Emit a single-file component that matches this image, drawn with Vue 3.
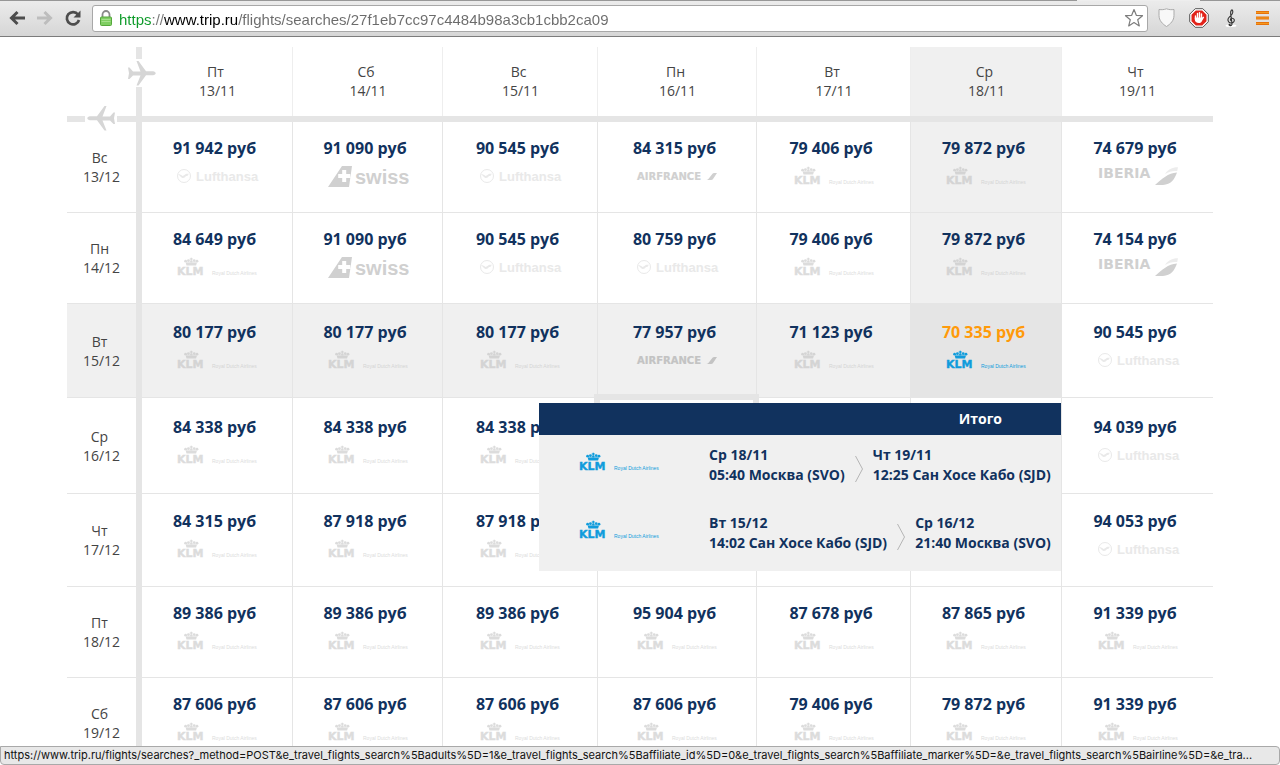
<script setup>
import { h } from 'vue'

const url = 'https://www.trip.ru/flights/searches/27f1eb7cc97c4484b98a3cb1cbb2ca09'
const statusText =
  'https://www.trip.ru/flights/searches?_method=POST&e_travel_flights_search%5Badults%5D=1&e_travel_flights_search%5Baffiliate_id%5D=0&e_travel_flights_search%5Baffiliate_marker%5D=&e_travel_flights_search%5Bairline%5D=&e_tra...'

const columns = [
  { day: 'Пт', date: '13/11', width: 151 },
  { day: 'Сб', date: '14/11', width: 150 },
  { day: 'Вс', date: '15/11', width: 155 },
  { day: 'Пн', date: '16/11', width: 159 },
  { day: 'Вт', date: '17/11', width: 154 },
  { day: 'Ср', date: '18/11', width: 151 },
  { day: 'Чт', date: '19/11', width: 151 }
]

const K = 'klm'
const L = 'lufthansa'
const S = 'swiss'
const A = 'airfrance'
const I = 'iberia'

const rows = [
  { day: 'Вс', date: '13/12', height: 91, cells: [['91 942', L], ['91 090', S], ['90 545', L], ['84 315', A], ['79 406', K], ['79 872', K], ['74 679', I]] },
  { day: 'Пн', date: '14/12', height: 91, cells: [['84 649', K], ['91 090', S], ['90 545', L], ['80 759', L], ['79 406', K], ['79 872', K], ['74 154', I]] },
  { day: 'Вт', date: '15/12', height: 94, cells: [['80 177', K], ['80 177', K], ['80 177', K], ['77 957', A], ['71 123', K], ['70 335', K], ['90 545', L]] },
  { day: 'Ср', date: '16/12', height: 96, cells: [['84 338', K], ['84 338', K], ['84 338', K], null, null, null, ['94 039', L]] },
  { day: 'Чт', date: '17/12', height: 93, cells: [['84 315', K], ['87 918', K], ['87 918', K], null, null, null, ['94 053', L]] },
  { day: 'Пт', date: '18/12', height: 91, cells: [['89 386', K], ['89 386', K], ['89 386', K], ['95 904', K], ['87 678', K], ['87 865', K], ['91 339', K]] },
  { day: 'Сб', date: '19/12', height: 91, cells: [['87 606', K], ['87 606', K], ['87 606', K], ['87 606', K], ['79 406', K], ['79 872', K], ['91 339', K]] }
]

const active = { row: 2, col: 5 }
const selected = { row: 3, col: 3 }

const legs = [
  { from: ['Ср 18/11', '05:40 Москва (SVO)'], to: ['Чт 19/11', '12:25 Сан Хосе Кабо (SJD)'] },
  { from: ['Вт 15/12', '14:02 Сан Хосе Кабо (SJD)'], to: ['Ср 16/12', '21:40 Москва (SVO)'] }
]

const planePath =
  'M3 8.500h1.500l3.500 4h7.500L11.500 2h2L21 12.300h7c1.500.2 2.700 1 2.700 2s-1.200 1.800-2.700 2h-7L13.500 26.500h-2l4-10H8l-3.500 3.600H3l1-5.800z'

function cellClass(r, c) {
  return {
    lit: (r === active.row && c < active.col) || (c === active.col && r < active.row),
    active: r === active.row && c === active.col
  }
}

const wide = '"DejaVu Sans", sans-serif'
const sans = '"Liberation Sans", Arial, sans-serif'
const word = (x, y, size, family, weight, value) =>
  h('text', { x, y, 'font-size': size, 'font-family': family, 'font-weight': weight }, value)

const art = {
  klm: () => [
    h('path', { d: 'M13.600 1.800h1.400v.8h.9v1h-.9v1h-1.400v-1h-.9v-1h.9zM8.800 7h11l-.7 2.400H9.500z' }),
    h('circle', { cx: 8.6, cy: 5.2, r: 1.4 }),
    h('circle', { cx: 11.4, cy: 4.6, r: 1.4 }),
    h('circle', { cx: 14.3, cy: 5.4, r: 1.2 }),
    h('circle', { cx: 17.2, cy: 4.6, r: 1.4 }),
    h('circle', { cx: 20, cy: 5.2, r: 1.4 }),
    h('path', { opacity: 0.6, d: 'M9 5.500h10.600v1.600H9z' }),
    h('g', { stroke: 'currentColor', 'stroke-width': 0.4 }, [word(0, 19, 11, wide, 700, 'KLM')]),
    word(35, 19, 5, sans, 400, 'Royal Dutch Airlines')
  ],
  lufthansa: () => [
    h('circle', { cx: 7, cy: 11, r: 6.5, fill: 'none', stroke: 'currentColor', 'stroke-width': 1 }),
    h('path', { d: 'M1 9c2 .2 3.300 1 4.600 2 1.600-.2 2.200-1.900 4-2.200h2.400l-.8 1h-1l1 .3-1 .9H9c-.8 1.300-2 2.100-3.400 1.900C4.300 12.700 2.800 10.600 1 9z' }),
    word(19, 16, 13, sans, 700, 'Lufthansa')
  ],
  swiss: () => [
    h('path', { 'fill-rule': 'evenodd', d: 'M14 1h10l-3 21H0zM14.200 5v4h-4v4h4v4h4v-4h4V9h-4V5z' }),
    word(27, 19, 20, sans, 700, 'swiss')
  ],
  airfrance: () => [
    h('g', { stroke: 'currentColor', 'stroke-width': 0.2 }, [word(0, 15, 10, wide, 700, 'AIRFRANCE')]),
    h('path', { d: 'M75.500 8.800Q76 8 77.200 8H80l-3.800 5.800Q75.500 15 74 15h-4.500q1.500-.4 2.300-1.500z' })
  ],
  iberia: () => [
    word(0, 13, 14, wide, 700, 'IBERIA'),
    h('path', { d: 'M79 7.500c-2.500 7-6 12-14 12.500h-8C64 14 70 8 79 7.500z' }),
    h('path', { opacity: 0.4, d: 'M80 2.200C75 2 69.500 4.500 67 9c4-2.500 8-3.500 12.200-3z' })
  ]
}

const names = { klm: 'KLM', lufthansa: 'Lufthansa', swiss: 'Swiss', airfrance: 'Air France', iberia: 'Iberia' }

const AirlineLogo = (props) =>
  h(
    'svg',
    { viewBox: '0 0 80 24', width: 80, height: 24, fill: 'currentColor', role: 'img', 'aria-label': names[props.name] },
    art[props.name]()
  )
AirlineLogo.props = ['name']
</script>

<template>
  <div class="window">
    <header class="toolbar">
      <button class="tool" type="button" aria-label="Назад">
        <svg viewBox="0 0 18 18" width="18" height="18" fill="none" stroke="#4d4d4d" stroke-width="3"><path d="M17 9H4M9.500 3L3.500 9l6 6" /></svg>
      </button>
      <button class="tool" type="button" aria-label="Вперёд" disabled>
        <svg viewBox="0 0 18 18" width="18" height="18" fill="none" stroke="#bdbdbd" stroke-width="3"><path d="M1 9h13M8.500 3l6 6-6 6" /></svg>
      </button>
      <button class="tool" type="button" aria-label="Обновить">
        <svg viewBox="0 0 18 18" width="18" height="18"><path d="M14 5.500A6.200 6.200 0 1 0 15 11" fill="none" stroke="#4d4d4d" stroke-width="2.700" /><path d="M16.500 1.500v7h-7z" fill="#4d4d4d" /></svg>
      </button>
      <div class="address">
        <svg class="lock" viewBox="0 0 12 16" width="12" height="16">
          <path d="M2.500 8V4.500a3.500 3.500 0 0 1 7 0V8" fill="none" stroke="#8a8a8a" stroke-width="1.800" />
          <rect x=".5" y="7" width="11" height="8.500" rx="1" fill="#7fce62" stroke="#56a83c" />
          <path d="M1.500 9.500h9M1.500 11.500h9" stroke="#a5e08c" />
        </svg>
        <input class="url" type="text" aria-label="Адрес страницы" :value="url" />
        <button class="star" type="button" aria-label="Добавить в закладки">
          <svg viewBox="0 0 20 20" width="20" height="20" fill="#fff" stroke="#7d7d7d" stroke-width="1.200" stroke-linejoin="round"><path d="M10 1.500l2.300 5.800 6.200.4-4.800 4 1.600 6.200L10 14.500l-5.300 3.400 1.600-6.200-4.800-4 6.200-.4z" /></svg>
        </button>
      </div>
      <button class="ext" type="button" aria-label="Щит">
        <svg viewBox="0 0 20 20" width="20" height="20"><path d="M9.500.8c2.500 1 5 1 7.500.7v6c0 5-3.500 8.500-7.500 11C5.500 16 2 12.500 2 7.500v-6C4.500 1.800 7 1.800 9.500.8z" fill="#f8f8f8" stroke="#ababab" /></svg>
      </button>
      <button class="ext" type="button" aria-label="Блокировщик">
        <svg viewBox="0 0 20 20" width="20" height="20">
          <path d="M6.200.7h7.600l5.500 5.500v7.600l-5.500 5.500H6.200L.7 13.800V6.200z" fill="#fff" stroke="#555" />
          <path d="M6.800 2.500h6.400l4.300 4.300v6.400l-4.300 4.300H6.800l-4.300-4.300V6.800z" fill="#e2231a" />
          <path d="M6.500 8v3M8.500 5.500v5M10.500 4.800v5M12.500 6v5" stroke="#fff" stroke-width="1.400" stroke-linecap="round" />
          <path d="M5.800 9.500h7.400l1.300-1 .7.700-2.200 3.800c-.7 1.500-1.500 2-3 2-2.500 0-4.200-1.500-4.200-3.500z" fill="#fff" />
        </svg>
      </button>
      <button class="ext" type="button" aria-label="Музыка">
        <svg viewBox="0 0 20 20" width="20" height="20" fill="none" stroke="#333" stroke-width="1.100">
          <ellipse cx="10" cy="17.800" rx="5.500" ry="1.200" fill="#fff" stroke="none" />
          <path d="M10.200 12.800c-1.400-.8-.8-2.700.9-2.600 1.900.1 2.700 1.900 1.900 3.300-1 1.800-4 1.900-5.300.3-1.300-1.700-.7-3.500.8-4.900 1.800-1.600 3.500-3.100 3.300-5.300-.1-1.600-.9-2.300-1.600-1.200-.7 1-.7 2.400-.5 3.900l1.300 9.200c.2 1.700-1 2.500-2.200 2" />
          <circle cx="8.600" cy="16.800" r="1.100" fill="#333" stroke="none" />
        </svg>
      </button>
      <button class="ext" type="button" aria-label="Меню">
        <svg viewBox="0 0 20 20" width="20" height="20"><path d="M3 4.500h13M3 10h13M3 15.500h13" stroke="#e8720c" stroke-width="3" /><path d="M3 4.500h13M3 10h13M3 15.500h13" stroke="#f39a1e" /></svg>
      </button>
    </header>

    <main class="page">
      <table class="matrix">
        <colgroup>
          <col class="head-col" />
          <col v-for="c in columns" :key="c.date" :style="{ width: c.width + 'px' }" />
        </colgroup>
        <thead>
          <tr>
            <td class="corner">
              <svg class="plane out" viewBox="0 0 32 28" width="32" height="28"><path :d="planePath" /></svg>
              <svg class="plane back" viewBox="0 0 32 28" width="32" height="28"><path transform="translate(33 0) scale(-1 1)" :d="planePath" /></svg>
            </td>
            <th v-for="(c, i) in columns" :key="c.date" scope="col" :class="{ lit: i === active.col }">
              <span class="day">{{ c.day }}</span>
              <span class="date">{{ c.date }}</span>
            </th>
          </tr>
        </thead>
        <tbody>
          <tr v-for="(row, r) in rows" :key="row.date" :style="{ height: row.height + 'px' }">
            <th scope="row" :class="{ lit: r === active.row }">
              <span class="day">{{ row.day }}</span>
              <span class="date">{{ row.date }}</span>
            </th>
            <td v-for="(cell, c) in row.cells" :key="c" :class="cellClass(r, c)">
              <span v-if="r === selected.row && c === selected.col" class="frame"></span>
              <a v-if="cell" class="offer" :class="cell[1]" href="#">
                <span class="price">{{ cell[0] }} руб</span>
                <AirlineLogo :name="cell[1]" />
              </a>
              <section v-if="r === active.row && c === active.col" class="summary">
                <h2>Итого</h2>
                <div v-for="leg in legs" :key="leg.from[0]" class="leg">
                  <AirlineLogo name="klm" />
                  <p>{{ leg.from[0] }}<br />{{ leg.from[1] }}</p>
                  <svg class="chevron" viewBox="0 0 8 28" width="8" height="28"><path d="M.5 1l7 13-7 13" fill="none" stroke="#b4b4b4" /></svg>
                  <p>{{ leg.to[0] }}<br />{{ leg.to[1] }}</p>
                </div>
              </section>
            </td>
          </tr>
        </tbody>
      </table>
    </main>

    <footer class="status">{{ statusText }}</footer>
  </div>
</template>

<style>
body {
  margin: 0;
  background: #fff;
}
</style>

<style scoped>
* {
  box-sizing: border-box;
}
.window {
  display: flex;
  flex-direction: column;
  height: 100vh;
  overflow: hidden;
  font-family: "Open Sans", "Noto Sans", sans-serif;
}
button {
  display: grid;
  place-items: center;
  border: 0;
  padding: 0;
  background: none;
}

.toolbar {
  display: flex;
  flex: none;
  align-items: center;
  height: 37px;
  padding: 0 7px;
  border-bottom: 1px solid #7c7c7c;
  background:
    linear-gradient(90deg, #979797 calc(100% - 203px), #eee 0 calc(100% - 80px), #979797 0) 0 0 / 100% 1px no-repeat,
    linear-gradient(#ececec, #d6d6d6);
}
.tool {
  width: 20px;
  height: 20px;
  margin-right: 8px;
}
.address {
  display: flex;
  flex: 1;
  align-items: center;
  height: 27px;
  margin: 0 9px 0 1px;
  padding: 0 3px 0 7px;
  border: 1px solid #a8a8a8;
  border-radius: 3px;
  background: #fff;
}
.lock {
  flex: none;
  margin-right: 7px;
}
.url {
  flex: 1;
  min-width: 0;
  height: 24px;
  border: 0;
  padding: 2px 0 0;
  outline: 0;
  font: 15px/22px "Liberation Sans", Arial, sans-serif;
  color: transparent;
  background: linear-gradient(90deg, #0c9a28 33px, #777 0 45px, #000 0 119px, #6b6b6b 0);
  -webkit-background-clip: text;
  background-clip: text;
}
.star {
  width: 20px;
  height: 20px;
}
.ext {
  width: 20px;
  height: 20px;
  margin-right: 12px;
}
.ext:last-child {
  margin-right: 0;
}

.page {
  flex: 1;
  min-height: 0;
  overflow: hidden;
  padding: 10px 67px 0;
}
.matrix {
  width: 100%;
  table-layout: fixed;
  border-spacing: 0;
  border-collapse: separate;
}
.head-col {
  width: 75px;
}
th,
td {
  position: relative;
  padding: 0;
  border: 0 solid #e5e5e5;
  text-align: center;
  vertical-align: middle;
}
th {
  font-size: 14px;
  line-height: 19px;
  font-weight: 400;
  color: #444;
}
thead tr {
  height: 75px;
}
thead th,
.corner {
  border-bottom-width: 6px;
}
thead th {
  padding-bottom: 2px;
  background-image: linear-gradient(#eee, #eee);
  background-position: 100% 0;
  background-size: 1px 100%;
  background-repeat: no-repeat;
}
thead th:last-child {
  background-image: none;
}
.corner,
tbody th {
  border-right-width: 6px;
}
tbody th,
tbody td {
  border-bottom-width: 1px;
}
tbody td {
  border-right-width: 1px;
}
tbody td:last-child {
  border-right-width: 0;
}
.lit {
  background-color: #f0f0f0;
}
.active {
  background-color: #e5e5e5;
}
.day,
.date {
  display: block;
}
.day {
  padding-right: 4px;
}

.plane {
  position: absolute;
  fill: #d6d6d6;
  background: #fff;
}
.out {
  left: 58px;
  top: 12px;
}
.back {
  left: 18px;
  top: 57px;
}

.offer {
  display: block;
  padding: 14px 0 23px;
  color: #d0d0d0;
  text-decoration: none;
}
.offer.klm {
  color: #dcdcdc;
}
.offer.lufthansa {
  color: #e9e9e9;
}
.lit .offer.klm {
  color: #d4d4d4;
}
.lit .offer.airfrance {
  color: #c3c3c3;
}
.price {
  display: block;
  padding-right: 5px;
  margin-bottom: 5px;
  font-size: 16px;
  line-height: 24px;
  font-weight: 700;
  color: #11325e;
}
.active .price {
  color: #ff9a0a;
}
.active .offer.klm {
  color: #109cdc;
}
.offer svg {
  display: block;
  margin: 0 auto;
  overflow: visible;
}
.frame {
  position: absolute;
  inset: -4px -3px -4px -4px;
  border: 6px solid #e5e5e5;
}

.summary {
  position: absolute;
  z-index: 2;
  top: calc(100% + 6px);
  right: 0;
  width: 522px;
  background: #f0f0f0;
  color: #11325e;
  text-align: left;
  font-size: 14px;
  line-height: 20px;
  font-weight: 700;
  white-space: nowrap;
}
.summary h2 {
  margin: 0;
  padding: 6px 59px 6px 0;
  background: #11325e;
  color: #fff;
  text-align: right;
  font-size: 14px;
  line-height: 20px;
}
.leg {
  display: flex;
  align-items: flex-start;
  padding: 10px 0 18px 40px;
}
.leg > svg:first-child {
  flex: none;
  margin: 6px 50px 0 0;
  color: #109cdc;
  overflow: visible;
}
.leg p {
  margin: 0;
}
.chevron {
  flex: none;
  margin: 10px 10px 0;
}

.status {
  flex: none;
  height: 19px;
  padding: 0 3px;
  border: 1px solid #a9a9a9;
  border-radius: 0 4px 4px 4px;
  background: #e8e8e8;
  color: #111;
  font: 11px/17px Inter, "Liberation Sans", sans-serif;
  white-space: nowrap;
  overflow: hidden;
}
</style>
